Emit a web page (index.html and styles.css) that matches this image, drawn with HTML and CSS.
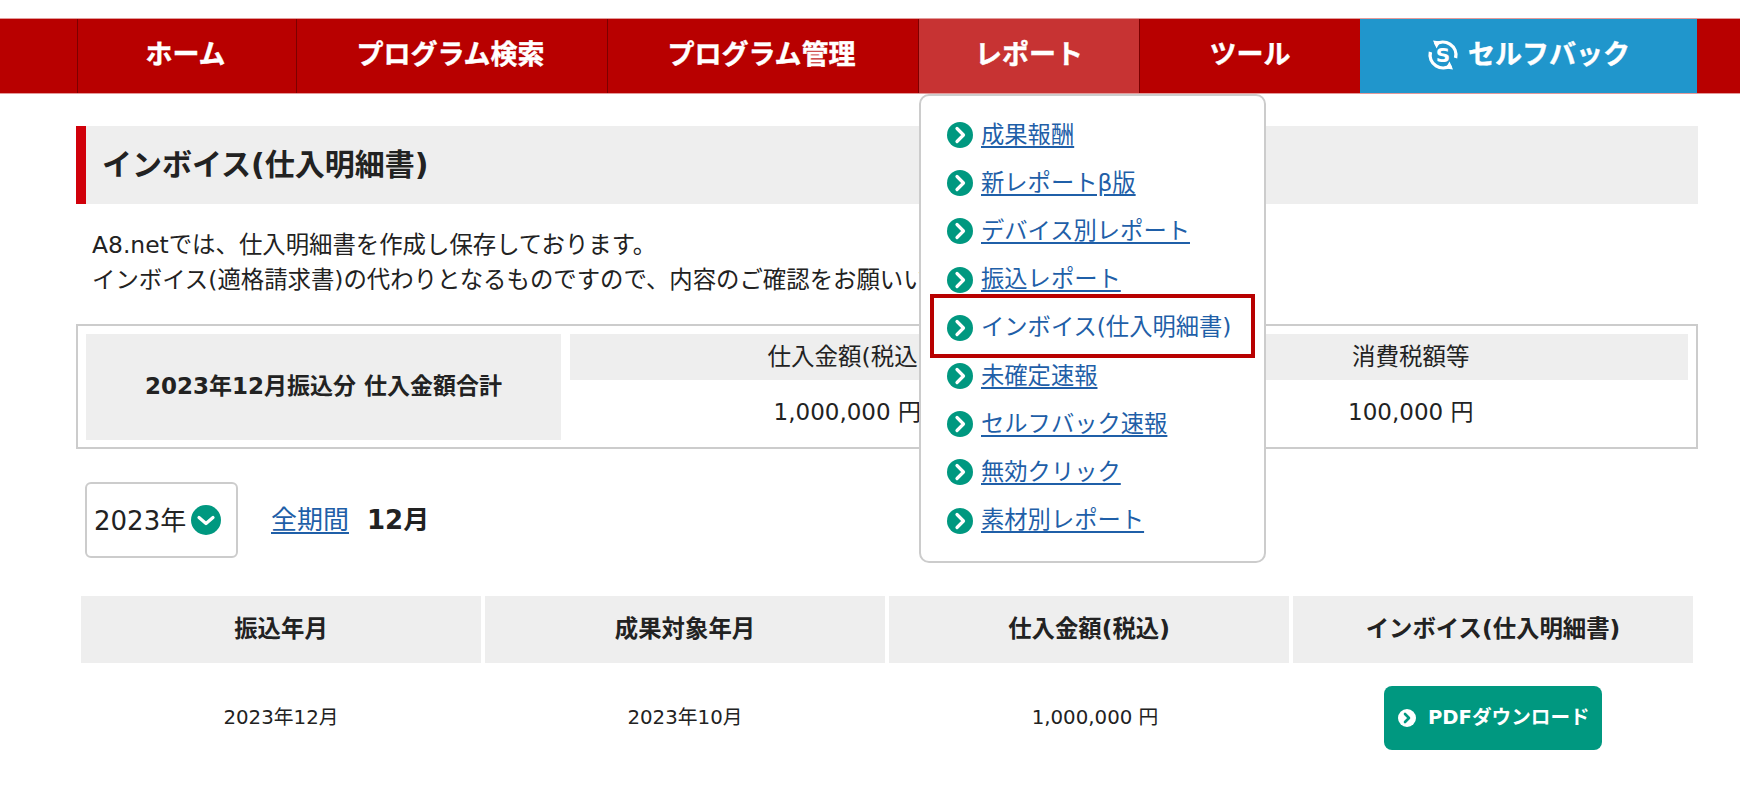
FILE: index.html
```html
<!DOCTYPE html>
<html lang="ja">
<head>
<meta charset="utf-8">
<title>インボイス(仕入明細書)</title>
<link rel="stylesheet" href="styles.css">
</head>
<body>
<svg class="defs" width="0" height="0" aria-hidden="true">
  <symbol id="chev-right" viewBox="0 0 26 26">
    <circle cx="13" cy="13" r="13" fill="#009880"/>
    <path d="M10 6.5l6.5 6.5-6.5 6.5" fill="none" stroke="#fff" stroke-width="3.2" stroke-linecap="round" stroke-linejoin="round"/>
  </symbol>
  <symbol id="chev-down" viewBox="0 0 30 30">
    <circle cx="15" cy="15" r="15" fill="#009880"/>
    <path d="M8 12.5l7 6 7-6" fill="none" stroke="#fff" stroke-width="3.2" stroke-linecap="round" stroke-linejoin="round"/>
  </symbol>
  <symbol id="chev-white" viewBox="0 0 18 18">
    <circle cx="9" cy="9" r="9" fill="#fff"/>
    <path d="M7 5l4 4-4 4" fill="none" stroke="#009880" stroke-width="2.6" stroke-linecap="round" stroke-linejoin="round"/>
  </symbol>
</svg>

<header class="nav">
  <a class="nav-item w-home"><span class="nav-text">ホーム</span></a>
  <a class="nav-item w-prog"><span class="nav-text">プログラム検索</span></a>
  <a class="nav-item w-prog"><span class="nav-text">プログラム管理</span></a>
  <div class="nav-item w-report active"><span class="nav-text">レポート</span>
    <ul class="menu">
      <li><svg class="bullet"><use href="#chev-right"/></svg><a>成果報酬</a></li>
      <li><svg class="bullet"><use href="#chev-right"/></svg><a>新レポートβ版</a></li>
      <li><svg class="bullet"><use href="#chev-right"/></svg><a>デバイス別レポート</a></li>
      <li><svg class="bullet"><use href="#chev-right"/></svg><a>振込レポート</a></li>
      <li class="current"><svg class="bullet"><use href="#chev-right"/></svg><a>インボイス(仕入明細書)</a></li>
      <li><svg class="bullet"><use href="#chev-right"/></svg><a>未確定速報</a></li>
      <li><svg class="bullet"><use href="#chev-right"/></svg><a>セルフバック速報</a></li>
      <li><svg class="bullet"><use href="#chev-right"/></svg><a>無効クリック</a></li>
      <li><svg class="bullet"><use href="#chev-right"/></svg><a>素材別レポート</a></li>
    </ul>
  </div>
  <a class="nav-item w-report"><span class="nav-text">ツール</span></a>
  <a class="nav-item w-self">
    <svg class="self-icon" viewBox="0 0 32 36" aria-hidden="true">
      <path d="M8 7.8A13 13 0 0 1 28.6 21" fill="none" stroke="#fff" stroke-width="3.4"/>
      <path d="M24 28.2A13 13 0 0 1 3.4 15" fill="none" stroke="#fff" stroke-width="3.4"/>
      <path d="M6 3.5l7.5 1-4 7z" fill="#fff"/>
      <path d="M26 32.5l-7.5-1 4-7z" fill="#fff"/>
      <text x="16" y="24.6" text-anchor="middle" class="self-s">S</text>
    </svg><span class="nav-text">セルフバック</span></a>
</header>

<main class="page">
  <h1 class="title"><span class="lift">インボイス(仕入明細書)</span></h1>
  <p class="intro">A8.netでは、仕入明細書を作成し保存しております。<br>インボイス(適格請求書)の代わりとなるものですので、内容のご確認をお願いいたします。</p>

  <section class="summary">
    <div class="sum-label">2023年12月振込分 仕入金額合計</div>
    <div class="sum-head">仕入金額(税込)</div>
    <div class="sum-head">消費税額等</div>
    <div class="sum-val">1,000,000 円</div>
    <div class="sum-val">100,000 円</div>
  </section>

  <div class="filter">
    <div class="select"><span class="select-text">2023年</span><svg class="select-icon"><use href="#chev-down"/></svg></div>
    <a class="all">全期間</a>
    <strong class="month">12月</strong>
  </div>

  <table class="list">
    <thead>
      <tr><th>振込年月</th><th>成果対象年月</th><th>仕入金額(税込)</th><th>インボイス(仕入明細書)</th></tr>
    </thead>
    <tbody>
      <tr>
        <td class="cell">2023年12月</td>
        <td class="cell">2023年10月</td>
        <td class="cell amount">1,000,000 円</td>
        <td class="action"><a class="pdf"><svg class="pdf-icon"><use href="#chev-white"/></svg><span class="pdf-text">PDFダウンロード</span></a></td>
      </tr>
    </tbody>
  </table>
</main>
</body>
</html>
```
FILE: styles.css
```css
*, *::before, *::after { box-sizing: border-box; }
html, body { margin: 0; padding: 0; }
body {
  background: #fff;
  color: #222;
  font-family: "DejaVu Sans", "Noto Sans CJK JP", sans-serif;
  font-size: 22px;
  overflow: hidden;
}
.defs { position: absolute; }

.nav {
  display: flex;
  height: 76px;
  margin-top: 18px;
  padding: 0 42px 0 77px;
  background: #b80000;
  border-top: 1px solid #e39a9a;
  border-bottom: 1px solid #e39a9a;
}
.nav-item {
  position: relative;
  display: flex;
  align-items: center;
  justify-content: center;
  border-left: 1px solid #7c0000;
  color: #fff;
  font-size: 27px;
  font-weight: 700;
}
.nav-text { padding: 0 3px 7px 0; -webkit-text-stroke: 0.4px #fff; }
.w-report .nav-text, .w-self .nav-text { padding-right: 0; }
.w-home { width: 219px; }
.w-prog { width: 311px; }
.w-report { width: 221px; }
.w-self { width: 337px; background: #2096cc; border-left: 0; gap: 9px; }
.active { background: #c73333; }
.self-icon { width: 32px; height: 36px; margin-bottom: 2px; }
.self-s { font-size: 20px; font-weight: 700; fill: #fff; }

.menu {
  position: absolute;
  z-index: 5;
  top: 75px;
  left: 0;
  width: 347px;
  height: 469px;
  margin: 0;
  padding: 15px 0 0 26px;
  list-style: none;
  background: #fff;
  border: 2px solid #ccc;
  border-radius: 10px;
  font-size: 23.3px;
  font-weight: 400;
}
.menu li {
  position: relative;
  display: flex;
  align-items: center;
  gap: 8px;
  height: 48.2px;
}
.menu a { margin-bottom: 5px; color: #1f5fa8; text-decoration: underline; text-underline-offset: 3px; }
.bullet { width: 26px; height: 26px; flex: none; }
.current a { text-decoration: none; }
.current::after {
  content: "";
  position: absolute;
  top: -10px;
  left: -17px;
  width: 325px;
  height: 64px;
  border: 4px solid #b80000;
}

.page { padding: 0 42px 0 76px; }
.title {
  display: flex;
  align-items: center;
  height: 78px;
  margin: 32px 0 0;
  padding-left: 16px;
  background: #eee;
  border-left: 10px solid #d0000a;
  font-size: 30px;
  font-weight: 700;
}
.lift { padding-bottom: 6px; }
.intro {
  margin: 24px 0 0;
  padding-left: 16px;
  font-size: 23.4px;
  line-height: 35px;
}
.summary {
  display: grid;
  grid-template-columns: 475px 1fr 1fr;
  grid-template-rows: 46px 60px;
  column-gap: 9px;
  height: 125px;
  margin-top: 26px;
  padding: 8px;
  border: 2px solid #ccc;
}
.sum-label {
  grid-row: 1 / 3;
  display: flex;
  align-items: center;
  justify-content: center;
  padding-bottom: 6px;
  background: #eee;
  font-weight: 700;
  font-size: 23px;
}
.sum-head {
  display: flex;
  align-items: center;
  justify-content: center;
  padding-bottom: 5px;
  background: #eee;
  font-size: 23.5px;
}
.sum-val {
  display: flex;
  align-items: center;
  justify-content: center;
  font-size: 23px;
}

.filter {
  display: flex;
  align-items: center;
  height: 76px;
  margin-top: 33px;
  padding-left: 9px;
  font-size: 26px;
}
.select {
  display: flex;
  align-items: center;
  gap: 5px;
  width: 153px;
  height: 76px;
  padding-left: 7px;
  border: 2px solid #ccc;
  border-radius: 6px;
}
.select-text { margin-bottom: 4px; }
.select-icon { width: 30px; height: 30px; flex: none; }
.all { margin-left: 33px; margin-bottom: 6px; color: #1f5fa8; text-decoration: underline; text-underline-offset: 3px; }
.month { margin-left: 18px; margin-bottom: 6px; }

.list {
  width: 1620px;
  margin-top: 34px;
  margin-left: 1px;
  table-layout: fixed;
  border-collapse: separate;
  border-spacing: 4px;
}
.list th {
  height: 67px;
  padding: 0 0 6px;
  background: #eee;
  font-size: 23.4px;
  font-weight: 700;
}
.cell {
  padding: 15px 0 2px;
  text-align: center;
  font-size: 19.8px;
}
.amount { padding-left: 12px; }
.action { padding: 19px 0 0; text-align: center; }
.pdf {
  display: inline-flex;
  align-items: center;
  gap: 12px;
  width: 218px;
  height: 64px;
  padding-left: 14px;
  background: #009880;
  border-radius: 8px;
  color: #fff;
  font-size: 19.6px;
  font-weight: 700;
  vertical-align: top;
}
.pdf-text { margin-bottom: 6px; }
.pdf-icon { width: 18px; height: 18px; flex: none; }
```
